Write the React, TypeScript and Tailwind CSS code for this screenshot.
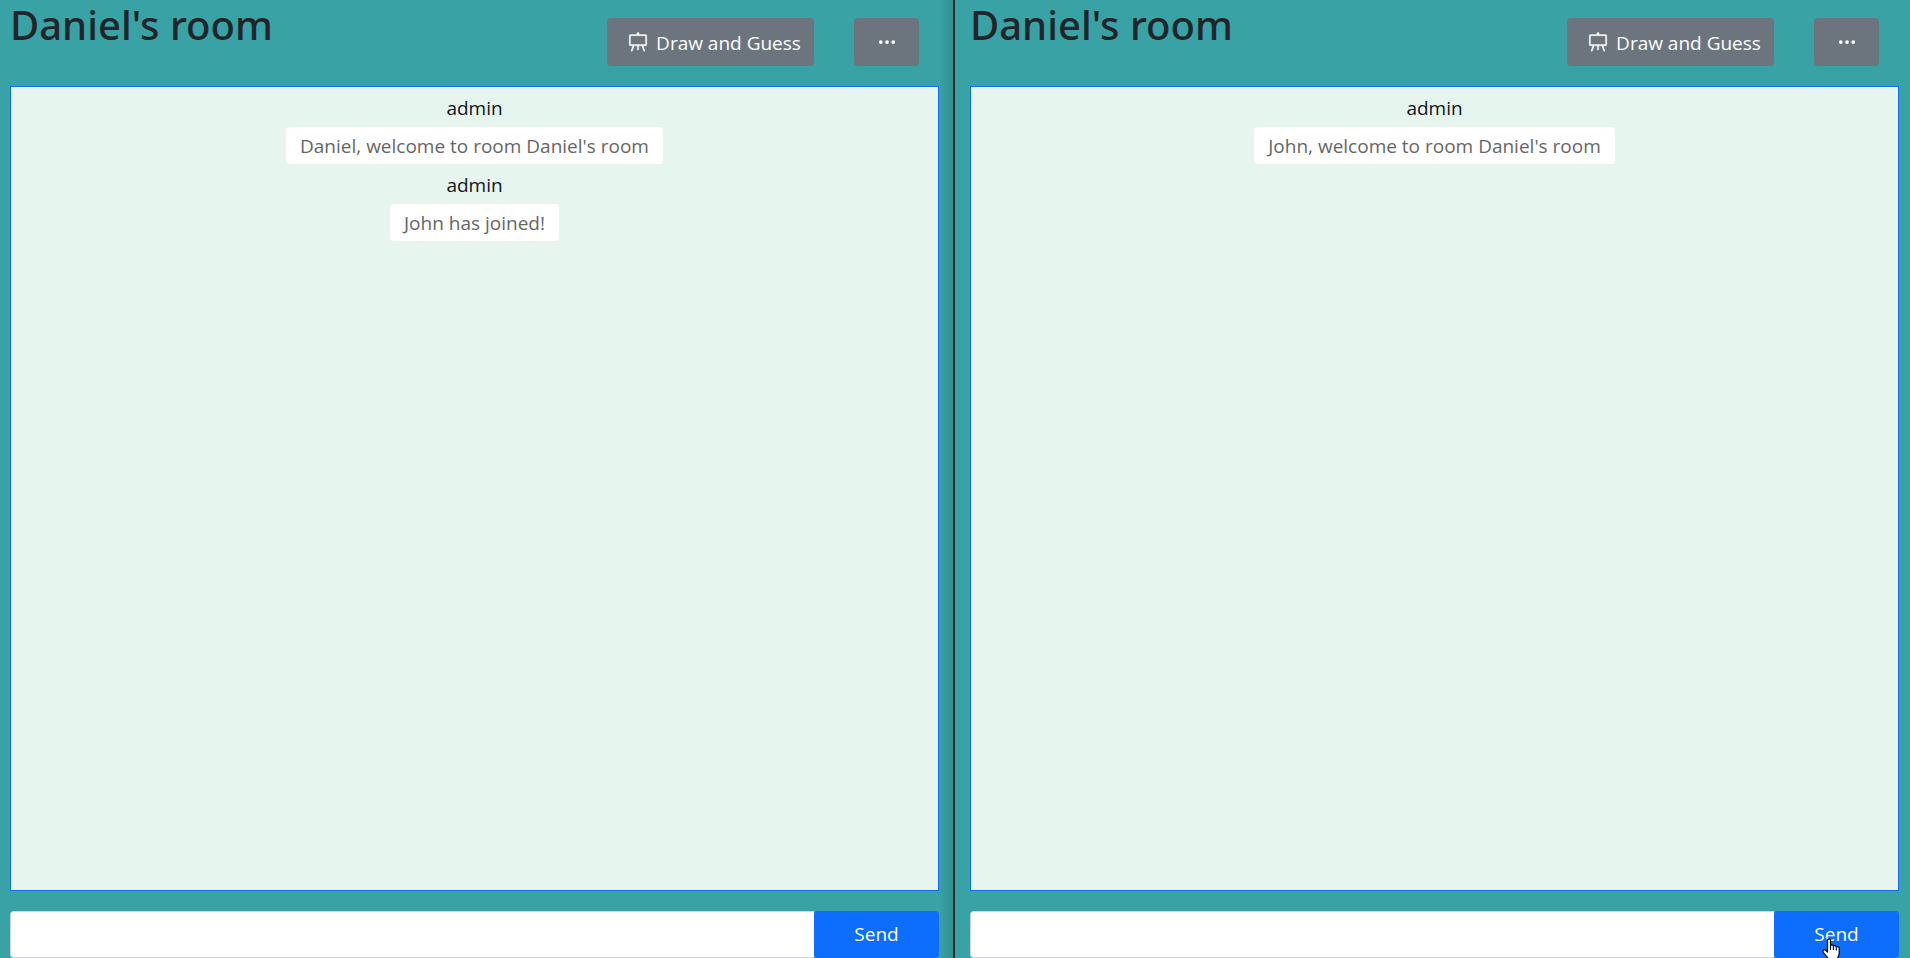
import { BsEasel, BsThreeDots } from "react-icons/bs";

type Message = { author: string; text: string };

type RoomProps = {
  title: string;
  messages: Message[];
  className: string;
  hovering?: boolean;
};

function HandCursor() {
  return (
    <svg
      aria-hidden="true"
      viewBox="0 0 18 23"
      className="pointer-events-none absolute left-12 top-[27px] h-[23px] w-[18px]"
    >
      <path
        d="M5.500 14V2.200C5.500.3 8.500.3 8.500 2.200V8C9 6.500 11.300 6.600 11.400 8.300C12 7.200 14.200 7.400 14.300 9.200C15 8.300 17.200 8.500 17.200 10.500V15C17.200 17.500 15.500 18.500 15.500 22H6.500C6.500 19 3 17.500 1.300 14.300C.2 12.200 2.200 11 3.700 12.300Z"
        fill="#fff"
        stroke="#000"
        strokeWidth="1.2"
        strokeLinejoin="round"
      />
      <path d="M8.500 8V12M11.400 8.500V12M14.300 9.500V12.500" stroke="#000" strokeWidth="1.1" />
    </svg>
  );
}

function Room({ title, messages, className, hovering = false }: RoomProps) {
  return (
    <section className={`flex min-w-0 flex-1 flex-col bg-[#39a2a5] ${className}`}>
      <header className="flex h-[86px] shrink-0 items-start justify-between pr-5">
        <h1 className="whitespace-nowrap font-['Noto_Sans','Open_Sans',sans-serif] text-[40px] font-medium leading-[50px] text-[#212529]">
          {title}
        </h1>
        <div className="flex gap-10 pt-[18px]">
          <button
            type="button"
            className="flex h-12 w-[207px] items-center justify-center gap-2 whitespace-nowrap rounded-[4px] bg-[#6c757d] pl-2 text-[19px] text-white"
          >
            <BsEasel size={20} strokeWidth={0.3} aria-hidden="true" />
            <span className="pt-0.5">Draw and Guess</span>
          </button>
          <button
            type="button"
            aria-label="More options"
            className="flex h-12 w-[65px] items-center justify-center rounded-[4px] bg-[#6c757d] text-white"
          >
            <BsThreeDots size={20} aria-hidden="true" />
          </button>
        </div>
      </header>

      <ul className="flex min-h-0 flex-1 flex-col items-center gap-1.5 overflow-y-auto border border-[#0d6efd] bg-[#e6f5ee] pt-1.5 text-[19px]">
        {messages.map((message) => (
          <li key={message.text} className="flex flex-col items-center gap-1">
            <span className="leading-[30px] text-[#141420]">{message.author}</span>
            <p className="rounded-[4px] bg-white px-3.5 pt-0.5 leading-[35px] text-[#666]">{message.text}</p>
          </li>
        ))}
      </ul>

      <form className="mt-5 flex h-[47px] shrink-0" onSubmit={(event) => event.preventDefault()}>
        <input
          type="text"
          aria-label="Message"
          className="min-w-0 flex-1 rounded-l-[4px] border border-r-0 border-[#ced4da] bg-white px-4 text-[19px] outline-none"
        />
        <div className="relative flex w-[125px]">
          <button type="submit" className="flex-1 rounded-[4px] bg-[#0d6efd] text-[19px] text-white">
            Send
          </button>
          {hovering && <HandCursor />}
        </div>
      </form>
    </section>
  );
}

export default function App() {
  return (
    <main className="flex h-screen overflow-hidden font-['Open_Sans','Noto_Sans',sans-serif]">
      <Room
        title="Daniel's room"
        className="bg-linear-to-l from-[#338f92] to-[#39a2a5] to-[14px] pl-2.5 pr-3.5"
        messages={[
          { author: "admin", text: "Daniel, welcome to room Daniel's room" },
          { author: "admin", text: "John has joined!" },
        ]}
      />
      <div className="w-0.5 shrink-0 bg-[#252b2c]" />
      <Room
        title="Daniel's room"
        className="pl-[15px] pr-[11px]"
        messages={[{ author: "admin", text: "John, welcome to room Daniel's room" }]}
        hovering
      />
    </main>
  );
}
